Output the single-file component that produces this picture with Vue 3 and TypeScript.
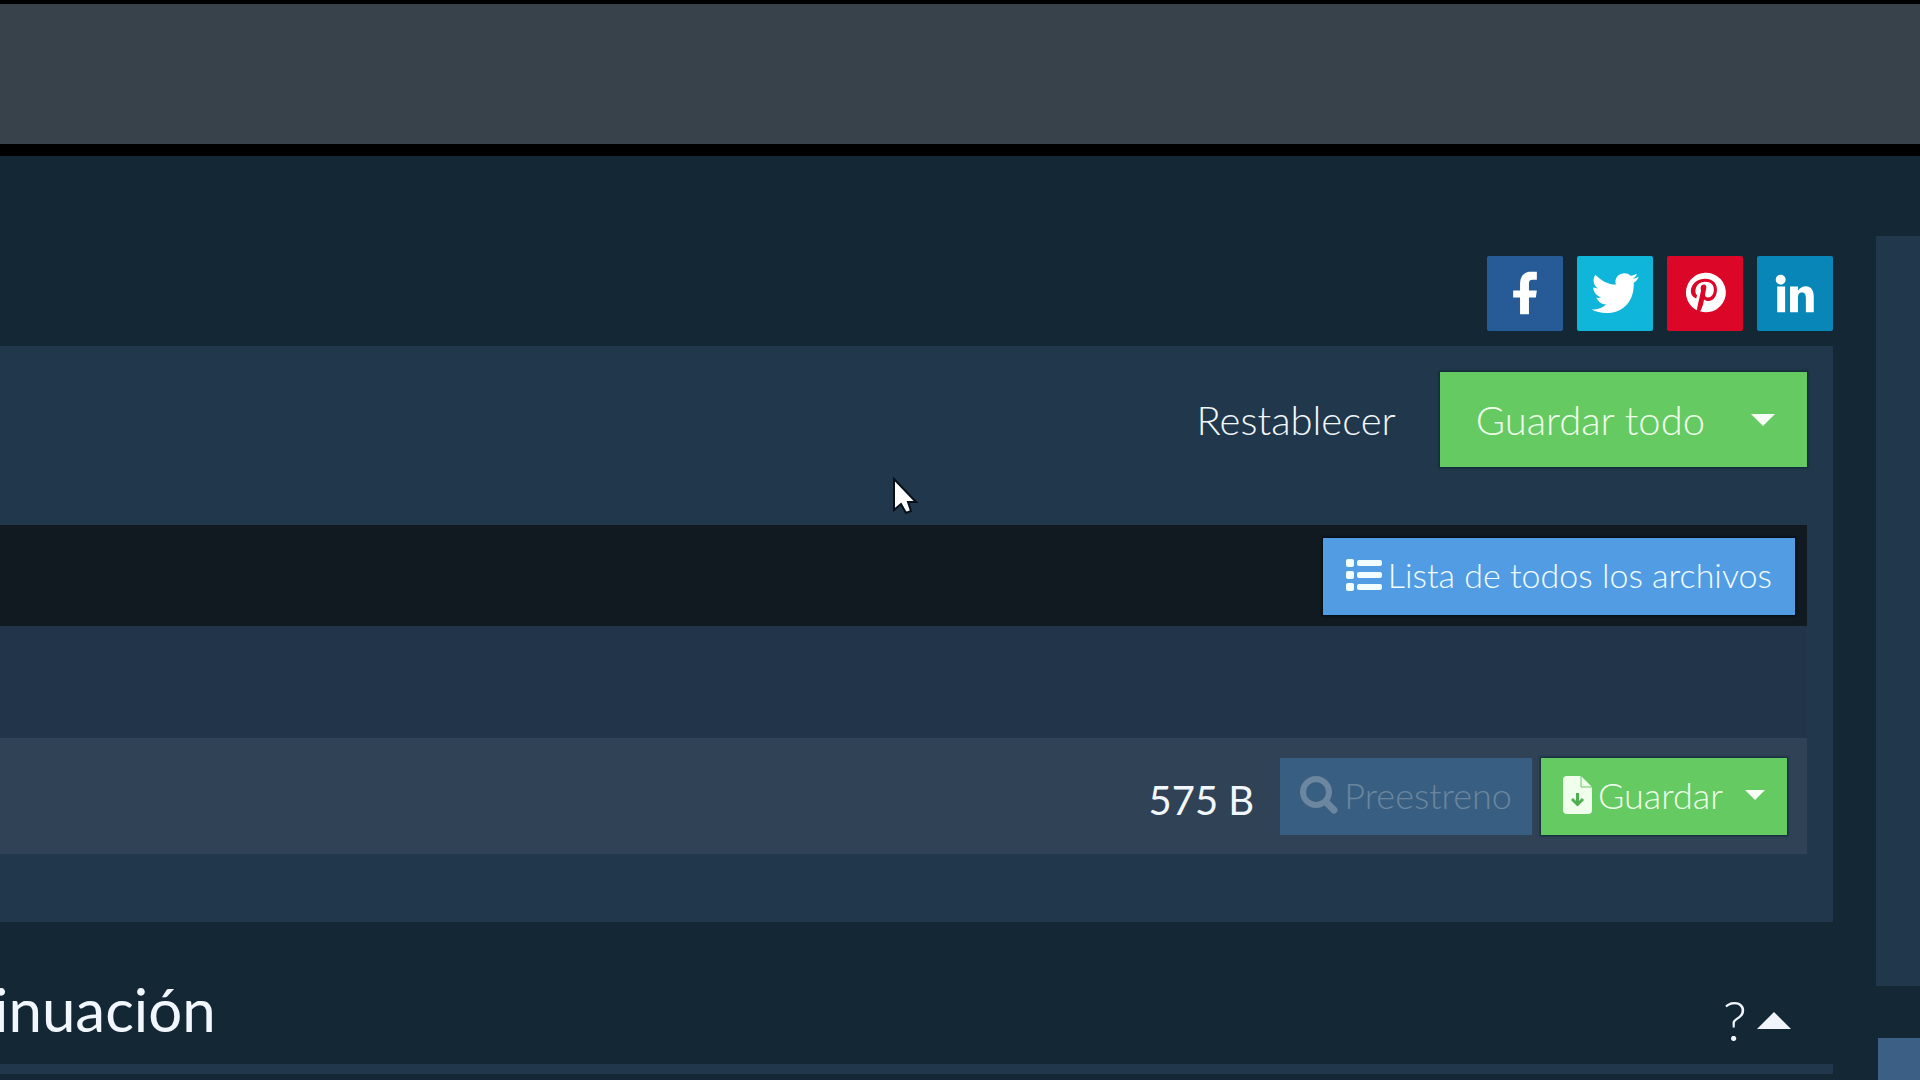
<script setup lang="ts">
interface Social {
  name: string
  color: string
  path: string
}

const socials: Social[] = [
  {
    name: 'Facebook',
    color: '#275b97',
    path: 'M33 59V42H26V35H33V29C33 20 37 16 44 16H50V24H46C43 24 42 25 42 28V35H50L49 42H42V59Z',
  },
  {
    name: 'Twitter',
    color: '#10b6da',
    path: 'M62 21C60 22 58 23 56 23C58 22 60 20 60 18C58 19 56 20 54 20C50 16 44 17 41 20C38 23 38 26 39 29C31 29 24 25 18 19C15 24 16 30 21 33C19 33 18 32 16 32C16 37 20 41 24 42C23 42 21 43 19 42C21 46 24 49 29 49C25 53 20 55 14 54C30 63 58 57 57 27C59 26 61 24 62 21Z',
  },
  {
    name: 'Pinterest',
    color: '#dc0628',
    path: 'M38 17A20 20 0 0 0 30 55C30 52 31 49 34 35C33 32 34 29 37 29C39 29 40 31 39 34L38 39C38 41 39 42 41 42C45 42 47 38 47 34C47 29 44 26 38 26C29 26 26 36 30 40L29 43C19 39 24 23 38 23C47 23 51 29 50 36C49 44 43 48 37 44C36 50 35 53 33 56A20 20 0 1 0 38 17Z',
  },
  {
    name: 'LinkedIn',
    color: '#0886b8',
    path: 'M20 31H28V57H20ZM24 19A5 5 0 1 1 23 29A5 5 0 0 1 24 19ZM33 31H41V35C45 29 57 28 57 41V57H49V43C49 39 48 37 45 37C42 37 41 39 41 43V57H33Z',
  },
]
</script>

<template>
  <div class="page">
    <header class="topbar"></header>
    <div class="layout">
      <main class="main">
        <nav class="socials">
          <a v-for="s in socials" :key="s.name" href="#" :aria-label="s.name" :style="{ background: s.color }">
            <svg viewBox="0 0 76 76" aria-hidden="true"><path :d="s.path" /></svg>
          </a>
        </nav>

        <section class="panel">
          <div class="actions">
            <button type="button" class="reset">Restablecer</button>
            <button type="button" class="btn green large">Guardar todo <i class="caret"></i></button>
          </div>
          <div class="listbar">
            <button type="button" class="btn blue">
              <svg class="icon" width="36" height="32" viewBox="0 0 36 32" aria-hidden="true">
                <rect x="0" y="0" width="8" height="8" rx="2" /><rect x="11" y="1" width="25" height="6" rx="2" />
                <rect x="0" y="12" width="8" height="8" rx="2" /><rect x="11" y="13" width="25" height="6" rx="2" />
                <rect x="0" y="24" width="8" height="8" rx="2" /><rect x="11" y="25" width="25" height="6" rx="2" />
              </svg>
              <span>Lista de todos los archivos</span>
            </button>
          </div>
          <div class="gap-row"></div>
          <div class="file-row">
            <span class="size">575 B</span>
            <button type="button" class="btn preview" disabled>
              <svg class="icon" width="38" height="38" viewBox="0 0 38 38" aria-hidden="true">
                <circle cx="16" cy="16" r="13" fill="none" stroke="currentColor" stroke-width="6" />
                <path d="M26 26L34 34" stroke="currentColor" stroke-width="7" stroke-linecap="round" />
              </svg>
              <span>Preestreno</span>
            </button>
            <button type="button" class="btn green save">
              <svg class="icon" width="29" height="38" viewBox="0 0 29 38" aria-hidden="true">
                <path d="M4 0H18L29 11V34Q29 38 25 38H4Q0 38 0 34V4Q0 0 4 0Z" />
                <path d="M18 0V11H29" fill="none" stroke="#65ca62" stroke-width="1" />
                <path d="M14.500 17V28M9 23L14.500 28.500L20 23" fill="none" stroke="#4fae50" stroke-width="3" />
              </svg>
              <span>Guardar</span>
              <i class="caret"></i>
            </button>
          </div>
        </section>

        <div class="section-head">
          <h2>inuación</h2>
          <div class="tools">
            <a href="#" aria-label="Ayuda">?</a>
            <button type="button" class="collapse" aria-label="Contraer"><i></i></button>
          </div>
        </div>
      </main>
      <aside class="side">
        <div class="card"></div>
        <div class="card accent"></div>
      </aside>
    </div>
    <svg class="pointer" width="28" height="42" viewBox="0 0 28 42" aria-hidden="true">
      <path d="M3 3V34L10 28L15 37L20 35L17 26H25Z" />
    </svg>
  </div>
</template>

<style>
body {
  margin: 0;
  background: #142735;
}
</style>

<style scoped>
.page {
  position: relative;
  height: 100vh;
  overflow: hidden;
  display: flex;
  flex-direction: column;
  font-family: Lato, sans-serif;
  font-weight: 300;
  color: #f1f7fd;
}
.topbar {
  flex: none;
  height: 140px;
  background: #38424a;
  border-top: 4px solid #000;
  border-bottom: 12px solid #000;
}
.layout {
  flex: 1;
  min-height: 0;
  display: flex;
  gap: 43px;
}
.main {
  flex: 1;
  min-width: 0;
  padding-top: 100px;
}
.socials {
  display: flex;
  justify-content: flex-end;
  gap: 14px;
}
.socials a {
  width: 76px;
  height: 75px;
  border-radius: 2px;
}
.socials svg {
  display: block;
  width: 76px;
  height: 75px;
  fill: #fff;
}
.panel {
  margin-top: 15px;
  padding: 26px 26px 68px 0;
  background: #21374b;
}
button {
  border: 0;
  padding: 0;
  background: none;
  color: inherit;
  font: inherit;
}
.actions {
  display: flex;
  justify-content: flex-end;
  align-items: center;
  gap: 44px;
}
.reset {
  font-size: 40px;
  line-height: 48px;
}
.btn {
  display: flex;
  align-items: center;
  height: 77px;
  font-size: 36px;
  line-height: 44px;
  white-space: nowrap;
}
.btn.large {
  height: 95px;
  padding: 0 32px 0 36px;
  font-size: 40px;
  gap: 46px;
}
.green {
  background: #65ca62;
  color: #f0ffec;
  box-shadow: 0 0 2px 1px #0c2a35;
}
.icon {
  flex: none;
  fill: currentColor;
}
.caret {
  border: 12px solid transparent;
  border-top-color: #f8fff6;
  border-bottom-width: 0;
}
.listbar {
  display: flex;
  justify-content: flex-end;
  margin-top: 58px;
  padding: 13px 12px 11px;
  background: #111a20;
}
.blue {
  padding: 0 23px 4px;
  gap: 6px;
  font-size: 34px;
  background: #529ce3;
  color: #f2fdff;
  box-shadow: 0 0 2px 1px #020c18;
}
.gap-row {
  height: 112px;
  background: #223449;
}
.file-row {
  display: flex;
  justify-content: flex-end;
  padding: 20px 20px 19px;
  background: #304256;
}
.size {
  margin-right: 26px;
  font-size: 40px;
  line-height: 84px;
  height: 77px;
  font-weight: 400;
}
.preview {
  margin-right: 9px;
  padding: 0 20px 4px;
  gap: 6px;
  background: #385f82;
  color: #6b869e;
}
.save {
  padding: 0 22px 4px;
  gap: 6px;
}
.save .caret {
  margin-left: 16px;
  border-width: 10px 10px 0;
}
.section-head {
  display: flex;
  justify-content: space-between;
  height: 142px;
  border-bottom: 10px solid #21374b;
}
h2 {
  margin: 49px 0 0 -6px;
  font-size: 60px;
  line-height: 76px;
  font-weight: 400;
}
.tools {
  display: flex;
  align-items: center;
  gap: 10px;
  padding: 54px 42px 0 0;
}
.tools a {
  color: inherit;
  font-size: 56px;
  line-height: 64px;
  text-decoration: none;
}
.collapse i {
  display: block;
  border: 17px solid transparent;
  border-top-width: 0;
  border-bottom-color: #f1f5fa;
}
.side {
  flex: none;
  width: 44px;
  padding-top: 80px;
}
.card {
  height: 750px;
  background: #21374b;
}
.accent {
  margin-top: 52px;
  margin-left: 2px;
  background: #3c5f86;
}
.pointer {
  position: absolute;
  left: 891px;
  top: 476px;
  fill: #fff;
  stroke: #071019;
  stroke-width: 2;
}
</style>
